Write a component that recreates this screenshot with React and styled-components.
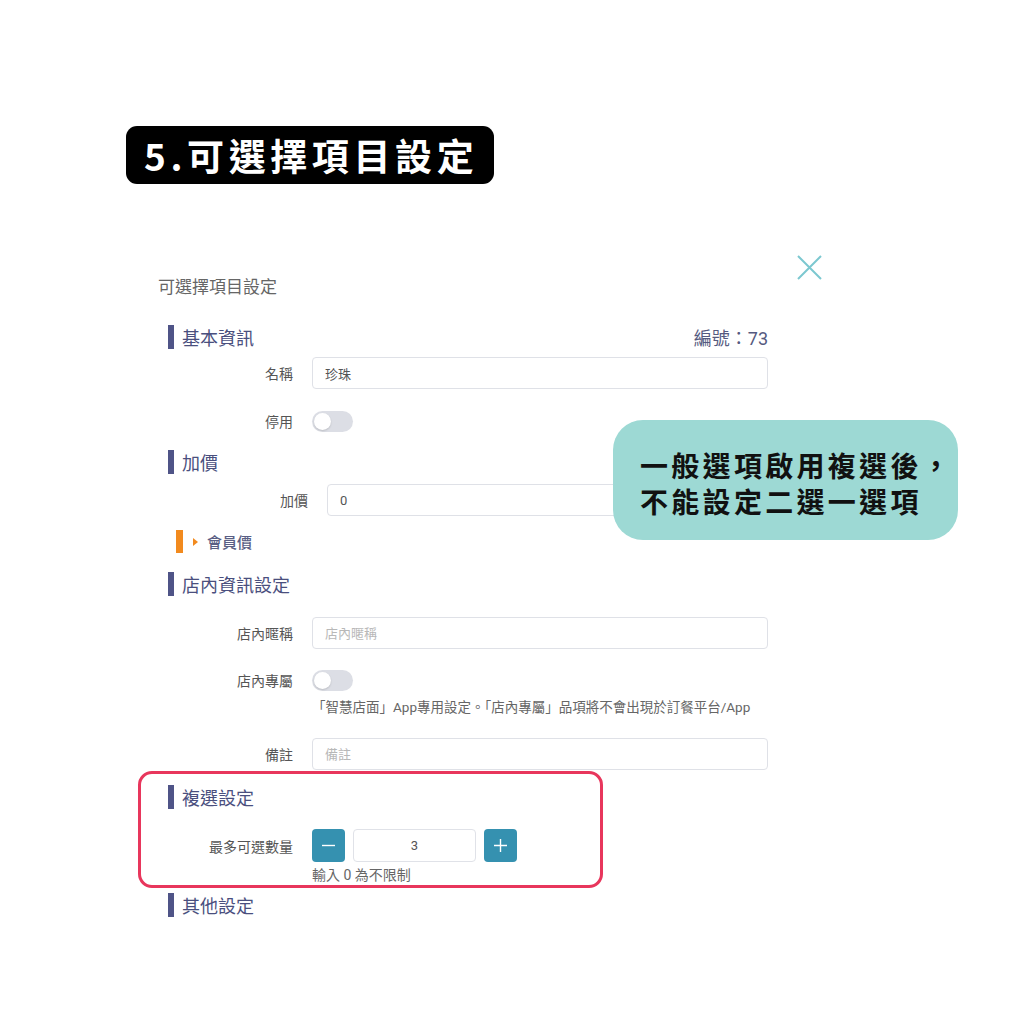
import React from "react";
import styled, { createGlobalStyle } from "styled-components";

const Global = createGlobalStyle`
  body {
    margin: 0;
    background: #ffffff;
    font-family: Roboto, "Noto Sans CJK TC", sans-serif;
  }
`;

const Page = styled.div`
  position: relative;
  width: 1024px;
  height: 1024px;
  box-sizing: border-box;
  padding: 126px 0 0 126px;
  background: #ffffff;
  overflow: hidden;
`;

const Badge = styled.div`
  display: inline-flex;
  align-items: center;
  box-sizing: border-box;
  width: 368px;
  height: 58px;
  padding-left: 18px;
  border-radius: 11px;
  background: #000000;
  color: #ffffff;
  font-family: "Noto Sans CJK TC", sans-serif;
  font-weight: 700;
  font-size: 37px;
  letter-spacing: 4.6px;
  white-space: nowrap;
`;

const Dialog = styled.div`
  width: 664px;
  margin: 71px 0 0 32px;
`;

const DialogHead = styled.div`
  display: flex;
  justify-content: space-between;
  align-items: flex-start;
`;

const DialogTitle = styled.div`
  margin-top: 19px;
  font-family: "Noto Sans CJK TC", sans-serif;
  font-size: 17px;
  line-height: 24px;
  color: #666666;
`;

const Close = styled.button`
  width: 25px;
  height: 25px;
  padding: 0;
  border: none;
  background: none;
`;

const Body = styled.div`
  width: 610px;
`;

const SectionHead = styled.div`
  display: flex;
  align-items: center;
  justify-content: space-between;
  height: 24px;
  margin: ${(p) => p.$mt || 0}px 0 0 10px;
`;

const SectionTitle = styled.div`
  display: flex;
  align-items: center;
  gap: 8px;
  font-family: "Noto Sans CJK TC", sans-serif;
  font-size: 18px;
  color: #4a4f7e;

  &::before {
    content: "";
    width: 6px;
    height: 24px;
    background: #4f5487;
  }
`;

const Serial = styled.div`
  font-family: Roboto, "Noto Sans CJK TC", sans-serif;
  font-size: 18px;
  color: #555a80;
`;

const Row = styled.div`
  display: flex;
  align-items: center;
  gap: 19px;
  min-height: 32px;
  margin-top: ${(p) => p.$mt || 0}px;
`;

const Label = styled.div`
  width: ${(p) => p.$w || 135}px;
  flex-shrink: 0;
  text-align: right;
  font-family: "Noto Sans CJK TC", sans-serif;
  font-size: 14px;
  color: #555555;
`;

const Input = styled.input`
  box-sizing: border-box;
  flex: 1;
  height: 32px;
  padding: 0 12px;
  border: 1px solid #dfe1e7;
  border-radius: 4px;
  font-family: Roboto, "Noto Sans CJK TC", sans-serif;
  font-size: 13px;
  color: #555555;
  outline: none;

  &::placeholder {
    color: #b8b8b8;
  }
`;

const Toggle = styled.span`
  position: relative;
  width: 41px;
  height: 21px;
  border-radius: 11px;
  background: #dcdee5;

  &::after {
    content: "";
    position: absolute;
    left: 2px;
    top: 2px;
    width: 17px;
    height: 17px;
    border-radius: 50%;
    background: #ffffff;
    box-shadow: 0 1px 2px rgba(0, 0, 0, 0.15);
  }
`;

const Hint = styled.div`
  margin: ${(p) => p.$mt || 0}px 0 0 154px;
  font-family: Roboto, "Noto Sans CJK TC", sans-serif;
  font-size: ${(p) => p.$size || 13}px;
  line-height: 18px;
  color: #666666;
  white-space: nowrap;
`;

const Member = styled.div`
  display: flex;
  align-items: center;
  height: 23px;
  margin: 14px 0 0 18px;
  font-family: "Noto Sans CJK TC", sans-serif;
  font-size: 15px;
  font-weight: 500;
  color: #5a5f85;

  &::before {
    content: "";
    width: 7px;
    height: 23px;
    margin-right: 10px;
    background: #f28a1e;
  }
`;

const Caret = styled.span`
  width: 0;
  height: 0;
  margin-right: 9px;
  border-top: 4px solid transparent;
  border-bottom: 4px solid transparent;
  border-left: 5px solid #f28a1e;
`;

const Highlight = styled.div`
  width: 465px;
  box-sizing: border-box;
  margin: 1px 0 0 -20px;
  padding: 11px 0 1px 17px;
  border: 3px solid #e8365c;
  border-radius: 14px;
`;

const Stepper = styled.div`
  display: flex;
  gap: 8px;
`;

const StepButton = styled.button`
  display: flex;
  align-items: center;
  justify-content: center;
  width: 33px;
  height: 33px;
  padding: 0;
  border: none;
  border-radius: 4px;
  background: #3591b0;
`;

const StepInput = styled.input`
  box-sizing: border-box;
  width: 123px;
  height: 33px;
  border: 1px solid #e0e2e8;
  border-radius: 4px;
  text-align: center;
  font-family: Roboto, sans-serif;
  font-size: 13px;
  color: #555555;
  outline: none;
`;

const Bubble = styled.div`
  position: absolute;
  left: 613px;
  top: 420px;
  width: 345px;
  height: 120px;
  box-sizing: border-box;
  padding: 27px 0 0 27px;
  border-radius: 30px;
  background: #9dd9d4;
  font-family: "Noto Sans CJK TC", sans-serif;
  font-weight: 700;
  font-size: 28px;
  line-height: 36px;
  letter-spacing: 3.3px;
  color: #111111;
  white-space: nowrap;
`;

const Field = ({ label, labelWidth, mt, ...rest }) => (
  <Row $mt={mt}>
    <Label $w={labelWidth}>{label}</Label>
    <Input {...rest} />
  </Row>
);

const Switch = ({ label, mt }) => (
  <Row $mt={mt}>
    <Label>{label}</Label>
    <Toggle />
  </Row>
);

export default function App() {
  return (
    <Page>
      <Global />
      <Badge>5.可選擇項目設定</Badge>

      <Dialog>
        <DialogHead>
          <DialogTitle>可選擇項目設定</DialogTitle>
          <Close aria-label="close">
            <svg width="25" height="25" viewBox="0 0 25 25">
              <path d="M1 1 L24 24 M24 1 L1 24" stroke="#7cc8d0" strokeWidth="2" fill="none" />
            </svg>
          </Close>
        </DialogHead>

        <Body>
          <SectionHead $mt={27}>
            <SectionTitle>基本資訊</SectionTitle>
            <Serial>編號：73</Serial>
          </SectionHead>
          <Field label="名稱" mt={8} defaultValue="珍珠" />
          <Switch label="停用" mt={16} />

          <SectionHead $mt={13}>
            <SectionTitle>加價</SectionTitle>
          </SectionHead>
          <Field label="加價" labelWidth={150} mt={10} defaultValue="0" />
          <Member>
            <Caret />
            會員價
          </Member>

          <SectionHead $mt={19}>
            <SectionTitle>店內資訊設定</SectionTitle>
          </SectionHead>
          <Field label="店內暱稱" mt={21} placeholder="店內暱稱" />
          <Switch label="店內專屬" mt={15} />
          <Hint $mt={2} $size={13.5}>「智慧店面」App專用設定。「店內專屬」品項將不會出現於訂餐平台/App</Hint>
          <Field label="備註" mt={22} placeholder="備註" />

          <Highlight>
            <SectionHead>
              <SectionTitle>複選設定</SectionTitle>
            </SectionHead>
            <Row $mt={20}>
              <Label>最多可選數量</Label>
              <Stepper>
                <StepButton aria-label="minus">
                  <svg width="15" height="15" viewBox="0 0 15 15">
                    <path d="M1 7.5 H14" stroke="#ffffff" strokeWidth="1.4" />
                  </svg>
                </StepButton>
                <StepInput defaultValue="3" />
                <StepButton aria-label="plus">
                  <svg width="15" height="15" viewBox="0 0 15 15">
                    <path d="M1 7.5 H14 M7.5 1 V14" stroke="#ffffff" strokeWidth="1.4" />
                  </svg>
                </StepButton>
              </Stepper>
            </Row>
            <Hint $mt={4} $size={14}>輸入 0 為不限制</Hint>
          </Highlight>

          <SectionHead $mt={5}>
            <SectionTitle>其他設定</SectionTitle>
          </SectionHead>
        </Body>
      </Dialog>

      <Bubble>
        一般選項啟用複選後，
        <br />
        不能設定二選一選項
      </Bubble>
    </Page>
  );
}
